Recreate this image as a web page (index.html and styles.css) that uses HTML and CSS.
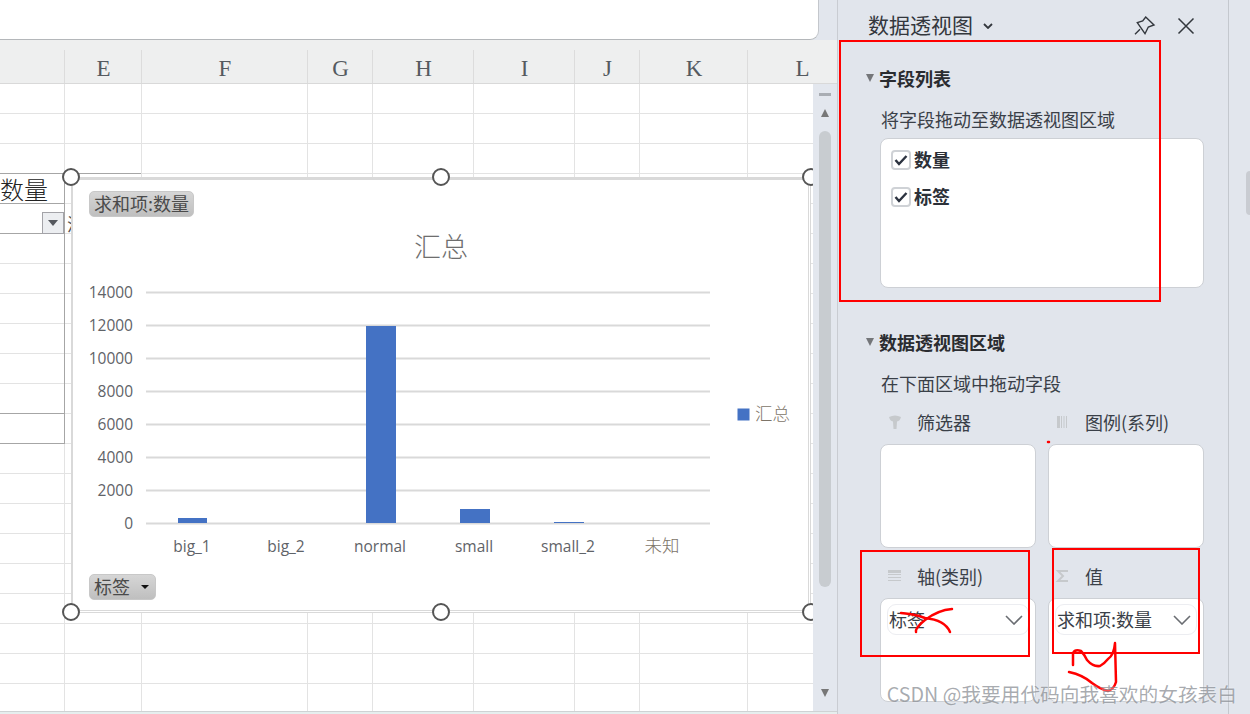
FILE: index.html
```html
<!DOCTYPE html>
<html lang="zh-CN">

<head>
    <meta charset="UTF-8">
    <meta name="viewport" content="width=device-width, initial-scale=1.0">
    <title>数据透视图</title>
    <link rel="stylesheet" href="styles.css">
</head>

<body>
    <div class="app">
        <section class="sheet">
            <div class="formula-bar">
                <div class="formula-input"></div>
            </div>

            <div class="col-heads cols">
                <div class="col-head"></div>
                <div class="col-head">E</div>
                <div class="col-head">F</div>
                <div class="col-head">G</div>
                <div class="col-head">H</div>
                <div class="col-head">I</div>
                <div class="col-head">J</div>
                <div class="col-head">K</div>
                <div class="col-head last">L</div>
            </div>

            <div class="sheet-main">
                <div class="grid cols">
                    <div class="grid-col"></div>
                    <div class="grid-col"></div>
                    <div class="grid-col"></div>
                    <div class="grid-col"></div>
                    <div class="grid-col"></div>
                    <div class="grid-col"></div>
                    <div class="grid-col"></div>
                    <div class="grid-col"></div>
                    <div class="grid-col last"></div>

                    <!-- pivot table sitting on the cells -->
                    <div class="pivot">
                        <div class="pivot-head">数量</div>
                        <div class="pivot-filter">
                            <span class="pivot-btn"><i class="arrow-down"></i></span>
                            <span class="pivot-next">汇总</span>
                        </div>
                        <div class="pivot-body"></div>
                        <div class="pivot-foot"></div>
                    </div>

                    <div class="chart">
                        <svg class="chart-svg" viewBox="73 180 734 430" width="734" height="430">
                            <text x="441" y="257" class="chart-title" text-anchor="middle">汇总</text>

                            <g class="gridlines">
                                <line x1="146" x2="710" y1="292.5" y2="292.5" />
                                <line x1="146" x2="710" y1="325.5" y2="325.5" />
                                <line x1="146" x2="710" y1="358.5" y2="358.5" />
                                <line x1="146" x2="710" y1="391.5" y2="391.5" />
                                <line x1="146" x2="710" y1="424.5" y2="424.5" />
                                <line x1="146" x2="710" y1="457.5" y2="457.5" />
                                <line x1="146" x2="710" y1="490.5" y2="490.5" />
                                <line x1="146" x2="710" y1="523.5" y2="523.5" />
                            </g>

                            <g class="y-labels" text-anchor="end">
                                <text x="133" y="298">14000</text>
                                <text x="133" y="331">12000</text>
                                <text x="133" y="364">10000</text>
                                <text x="133" y="397">8000</text>
                                <text x="133" y="430">6000</text>
                                <text x="133" y="463">4000</text>
                                <text x="133" y="496">2000</text>
                                <text x="133" y="529">0</text>
                            </g>

                            <g class="bars">
                                <rect x="178" y="518" width="29" height="5" />
                                <rect x="366" y="326" width="30" height="197" />
                                <rect x="460" y="509" width="30" height="14" />
                                <rect x="554" y="522" width="30" height="1" />
                            </g>

                            <g class="x-labels" text-anchor="middle">
                                <text x="192" y="552">big_1</text>
                                <text x="286" y="552">big_2</text>
                                <text x="380" y="552">normal</text>
                                <text x="474" y="552">small</text>
                                <text x="568" y="552">small_2</text>
                                <text x="662" y="552" class="cjk-label">未知</text>
                            </g>

                            <rect x="737.5" y="408.500" width="12" height="12" class="legend-key" />
                            <text x="755" y="420" class="cjk-label">汇总</text>
                        </svg>

                        <div class="field-btn field-value">求和项:数量</div>
                        <div class="field-btn field-axis">标签<i class="arrow-small"></i></div>

                        <span class="handle h-tl"></span>
                        <span class="handle h-tc"></span>
                        <span class="handle h-tr"></span>
                        <span class="handle h-bl"></span>
                        <span class="handle h-bc"></span>
                        <span class="handle h-br"></span>
                    </div>
                </div>

                <div class="scrollbar">
                    <div class="scroll-minus"></div>
                    <div class="scroll-up"></div>
                    <div class="scroll-thumb"></div>
                    <div class="scroll-down"></div>
                </div>
            </div>

            <div class="sheet-foot"></div>
        </section>

        <aside class="panel">
            <header class="panel-top">
                <h1 class="panel-title">数据透视图</h1>
                <svg class="panel-caret" width="10" height="6" viewBox="0 0 10 6">
                    <path d="M1 1 L5 5 L9 1" />
                </svg>
                <svg class="pin" width="22" height="22" viewBox="0 0 22 22">
                    <path d="M11.700 2 L20 10 L14.300 12 L11 18.700 L3.300 7.700 L8.700 6 Z M6 14.300 L1 19.300" />
                </svg>
                <svg class="close" width="18" height="18" viewBox="0 0 18 18">
                    <path d="M1.500 1.500 L16.500 16.500 M16.500 1.500 L1.500 16.500" />
                </svg>
            </header>

            <h2 class="section-head first"><i class="tri"></i>字段列表</h2>
            <p class="hint">将字段拖动至数据透视图区域</p>
            <div class="field-list">
                <label class="field-row">
                    <span class="check"><svg width="14" height="12" viewBox="0 0 14 12"><path d="M1.500 6 L5 10 L12.500 2" /></svg></span>
                    数量
                </label>
                <label class="field-row">
                    <span class="check"><svg width="14" height="12" viewBox="0 0 14 12"><path d="M1.500 6 L5 10 L12.500 2" /></svg></span>
                    标签
                </label>
            </div>

            <h2 class="section-head second"><i class="tri"></i>数据透视图区域</h2>
            <p class="hint">在下面区域中拖动字段</p>

            <div class="areas">
                <div class="area">
                    <div class="area-label">
                        <svg width="16" height="16" viewBox="0 0 16 16" class="area-icon">
                            <path d="M2 3 Q8 0 14 3 Q13 7 10 7.500 L9.500 15 L6.500 15 L6 7.500 Q3 7 2 3 Z" />
                        </svg>
                        筛选器
                    </div>
                    <div class="area-box"></div>
                </div>
                <div class="area">
                    <div class="area-label">
                        <svg width="16" height="16" viewBox="0 0 16 16" class="area-icon">
                            <rect x="2" y="2" width="3" height="12" />
                            <rect x="6" y="2" width="1" height="12" />
                            <rect x="8.500" y="2" width="1" height="12" />
                            <rect x="11" y="2" width="1" height="12" />
                        </svg>
                        图例(系列)
                    </div>
                    <div class="area-box"></div>
                </div>
                <div class="area">
                    <div class="area-label">
                        <svg width="16" height="16" viewBox="0 0 16 16" class="area-icon">
                            <rect x="1" y="2" width="13" height="3" />
                            <rect x="1" y="6" width="13" height="1" />
                            <rect x="1" y="9" width="13" height="1" />
                            <rect x="1" y="12" width="13" height="1" />
                        </svg>
                        轴(类别)
                    </div>
                    <div class="area-box">
                        <div class="pill">标签
                            <svg width="18" height="10" viewBox="0 0 18 10"><path d="M1 1 L9 9 L17 1" /></svg>
                        </div>
                    </div>
                </div>
                <div class="area">
                    <div class="area-label">
                        <svg width="16" height="16" viewBox="0 0 16 16" class="area-icon sigma">
                            <path d="M13 3 L3 3 L8 8 L3 13 L13 13" />
                        </svg>
                        值
                    </div>
                    <div class="area-box">
                        <div class="pill">求和项:数量
                            <svg width="18" height="10" viewBox="0 0 18 10"><path d="M1 1 L9 9 L17 1" /></svg>
                        </div>
                    </div>
                </div>
            </div>
        </aside>

        <div class="side-strip">
            <div class="strip-tab"></div>
        </div>
    </div>

    <!-- red pen marks on top of everything -->
    <div class="red-box box-fields"></div>
    <div class="red-box box-axis"></div>
    <div class="red-box box-value"></div>
    <svg class="pen" width="1250" height="714" viewBox="0 0 1250 714">
        <path d="M901 613 Q915 614 925 618 Q945 620 950 632" />
        <path d="M952 609 Q938 610 925 620 Q915 628 916 632" />
        <path d="M1073 665 L1073 653 Q1075 649 1081 651 Q1084 654 1087 660 Q1093 667 1100 666 Q1104 664 1108 659 Q1114 655 1115 643 L1116 682 Q1114 689 1108 691 Q1100 689 1092 683 Q1083 675 1069 672" />
        <path class="dot" d="M1048 442 L1049 442" />
    </svg>

    <div class="watermark">CSDN @我要用代码向我喜欢的女孩表白</div>
</body>

</html>
```

FILE: styles.css
```css
* {
    box-sizing: border-box;
}

html,
body {
    margin: 0;
    height: 100%;
    overflow: hidden;
}

body {
    position: relative;
    font-family: "Noto Sans CJK SC", sans-serif;
    color: #2b2f36;
}

.app {
    display: flex;
    height: 714px;
    background-color: #e2e6ed;
}

/* ---- sheet ---- */
.sheet {
    display: flex;
    flex-direction: column;
    width: 837px;
    flex-shrink: 0;
}

.formula-bar {
    height: 40px;
}

.formula-input {
    width: 819px;
    height: 40px;
    background-color: #fff;
    border-right: 1px solid #c4c7cc;
    border-bottom: 1px solid #b4b7ba;
    border-bottom-right-radius: 9px;
}

.cols {
    display: grid;
    grid-template-columns: 65px 77px 166px 65px 101px 101px 65px 108px 108px;
}

.col-heads {
    height: 44px;
    padding-top: 10px;
    background-color: #eeefef;
    border-bottom: 1px solid #d9d9d9;
    overflow: hidden;
}

.col-head {
    padding-left: 1px;
    border-right: 1px solid #dcdcdc;
    text-align: center;
    font-family: "Liberation Serif", serif;
    font-size: 23px;
    line-height: 37px;
    color: #555a60;
}

.col-head.last {
    border-right: 0;
}

.sheet-main {
    display: flex;
    height: 627px;
    overflow: hidden;
}

.grid {
    position: relative;
    width: 813px;
    flex-shrink: 0;
    background-color: #fff;
    background-image: repeating-linear-gradient(to bottom, transparent 0, transparent 29px, #e3e3e3 29px, #e3e3e3 30px);
}

.grid-col {
    border-right: 1px solid #e3e3e3;
}

.grid-col.last {
    border-right: 0;
}

/* pivot table: offsets are from the top of the grid */
.pivot {
    position: absolute;
    left: 0;
    top: 89px;
    width: 65px;
    height: 271px;
    border-right: 1px solid #a6a6a6;
    border-bottom: 1px solid #a6a6a6;
}

.pivot-head {
    position: relative;
    height: 31px;
    border-top: 1px solid #a6a6a6;
    border-bottom: 1px solid #a6a6a6;
    font-size: 24px;
    font-weight: 300;
    line-height: 30px;
    color: #222;
    white-space: nowrap;
}

.pivot-head::after {
    content: "";
    position: absolute;
    left: 64px;
    top: -1px;
    width: 77px;
    border-top: 1px solid #a6a6a6;
}

.pivot-filter {
    position: relative;
    height: 30px;
    border-bottom: 1px solid #a6a6a6;
}

.pivot-btn {
    position: absolute;
    right: 0;
    top: 8px;
    display: flex;
    align-items: center;
    justify-content: center;
    width: 22px;
    height: 22px;
    background-color: #eceef1;
    border: 1px solid #a3a3a8;
}

.arrow-down {
    border-left: 5px solid transparent;
    border-right: 5px solid transparent;
    border-top: 6px solid #55585e;
}

.pivot-next {
    position: absolute;
    left: 67px;
    top: 8px;
    font-size: 18px;
    line-height: 22px;
    color: #555;
    white-space: nowrap;
}

.pivot-body {
    height: 180px;
    border-bottom: 1px solid #a6a6a6;
}

.pivot-foot {
    height: 29px;
}

/* ---- chart object ---- */
.chart {
    position: absolute;
    left: 71px;
    top: 93px;
    width: 740px;
    height: 436px;
    background-color: #fff;
    border: 3px solid #d9d9d9;
    border-right-style: double;
    border-bottom-style: double;
    border-left-width: 2px;
}

.chart-svg {
    display: block;
    font-family: "Open Sans", sans-serif;
    font-size: 15.5px;
    fill: #5f6368;
}

.chart-title {
    font-family: "Noto Sans CJK SC", sans-serif;
    font-size: 27px;
    font-weight: 300;
    fill: #6e6e6e;
}

.gridlines line {
    stroke: #d9d9d9;
    stroke-width: 2;
}

.bars rect,
.legend-key {
    fill: #4472c4;
}

.cjk-label {
    font-family: "Noto Sans CJK SC", sans-serif;
    font-size: 17.500px;
    font-weight: 300;
    fill: #7d7468;
}

.field-btn {
    position: absolute;
    display: flex;
    align-items: center;
    left: 16px;
    height: 26px;
    padding: 0 0 2px 4px;
    font-size: 18px;
    color: #4a4a4a;
    background: linear-gradient(to bottom, #d6d6d6, #bfbfbf);
    border: 1px solid #c8c8c8;
    border-radius: 5px;
    white-space: nowrap;
}

.field-value {
    top: 11px;
    width: 105px;
}

.field-axis {
    top: 394px;
    width: 67px;
}

.arrow-small {
    margin-left: 11px;
    margin-top: 2px;
    border-left: 4px solid transparent;
    border-right: 4px solid transparent;
    border-top: 4px solid #111;
}

.handle {
    position: absolute;
    width: 18px;
    height: 18px;
    background-color: #fff;
    border: 2px solid #555;
    border-radius: 50%;
}

.h-tl { left: -11px; top: -12px; }
.h-tc { left: 359px; top: -12px; }
.h-tr { left: 729px; top: -12px; }
.h-bl { left: -11px; top: 423px; }
.h-bc { left: 359px; top: 423px; }
.h-br { left: 729px; top: 423px; }

/* ---- vertical scrollbar ---- */
.scrollbar {
    position: relative;
    display: flex;
    flex-direction: column;
    align-items: center;
    flex: 1;
    padding-top: 9px;
    background-color: #e3e7ee;
}

.scroll-minus {
    width: 12px;
    height: 3px;
    background-color: #a9adb3;
}

.scroll-up {
    margin-top: 13px;
    border-left: 4px solid transparent;
    border-right: 4px solid transparent;
    border-bottom: 8px solid #777;
}

.scroll-thumb {
    width: 12px;
    height: 456px;
    margin-top: 14px;
    background-color: #c8ccd0;
    border-radius: 6px;
}

.scroll-down {
    margin-top: 102px;
    border-left: 4px solid transparent;
    border-right: 4px solid transparent;
    border-top: 8px solid #777;
}

.sheet-foot {
    height: 3px;
    background-color: #e6eeee;
    border-top: 1px solid #cfd2d4;
}

/* ---- pivot chart panel ---- */
.panel {
    width: 392px;
    flex-shrink: 0;
    padding-left: 41px;
    background-color: #e1e5ec;
    border-left: 1px solid #c9ccd2;
    border-right: 1px solid #c4c8ce;
}

.panel-top {
    display: flex;
    align-items: center;
    height: 52px;
    margin-left: -11px;
}

.panel-title {
    margin: 0 0 4px;
    font-size: 21px;
    font-weight: 400;
    color: #33373d;
}

.panel-caret {
    margin-left: 10px;
    fill: none;
    stroke: #33373d;
    stroke-width: 1.8;
}

.pin {
    margin-left: 141px;
    fill: none;
    stroke: #33373d;
    stroke-width: 1.4;
}

.close {
    margin-left: 21px;
    fill: none;
    stroke: #33373d;
    stroke-width: 1.5;
}

.section-head {
    position: relative;
    margin: 0;
    padding-bottom: 2px;
    font-size: 18px;
    line-height: 22px;
    font-weight: 700;
    color: #2a2c30;
}

.section-head.first {
    margin-top: 15px;
}

.section-head.second {
    margin-top: 43px;
}

.tri {
    position: absolute;
    left: -13px;
    top: 7px;
    border-left: 4px solid transparent;
    border-right: 4px solid transparent;
    border-top: 8px solid #747679;
}

.hint {
    margin: 17px 0 0 2px;
    padding-bottom: 2px;
    font-size: 18px;
    line-height: 22px;
    color: #3a4048;
}

.field-list {
    width: 324px;
    height: 150px;
    margin: 6px 0 0 1px;
    padding: 11px 10px;
    background-color: #fff;
    border: 1px solid #cdd0d5;
    border-radius: 8px;
}

.field-row {
    display: flex;
    align-items: center;
    height: 20px;
    margin-bottom: 17px;
    padding-bottom: 2px;
    font-size: 18px;
    font-weight: 700;
    color: #2c3038;
}

.check {
    display: flex;
    align-items: center;
    justify-content: center;
    width: 20px;
    height: 20px;
    margin: 2px 3px 0 0;
    flex-shrink: 0;
    background-color: #fff;
    border: 2px solid #cfd2d6;
    border-radius: 4px;
}

.check svg {
    fill: none;
    stroke: #2c3340;
    stroke-width: 2.4;
}

.areas {
    display: grid;
    grid-template-columns: 156px 156px;
    column-gap: 12px;
    row-gap: 17px;
    margin: 15px 0 0 1px;
}

.area-label {
    display: flex;
    align-items: center;
    height: 24px;
    margin-left: 7px;
    padding-bottom: 2px;
    font-size: 18px;
    color: #3a4048;
}

.area-icon {
    margin-right: 14px;
    fill: #c6c9cc;
}

.area-icon.sigma {
    fill: none;
    stroke: #c6c9cc;
    stroke-width: 2;
}

.area-box {
    height: 104px;
    margin-top: 9px;
    padding: 5px 6px;
    background-color: #fff;
    border: 1px solid #cdd0d5;
    border-radius: 8px;
}

.pill {
    display: flex;
    align-items: center;
    justify-content: space-between;
    width: 142px;
    height: 31px;
    padding: 0 5px 2px 1px;
    font-size: 18px;
    color: #3a4048;
    background-color: #fff;
    border: 1px solid #ecedf1;
    border-radius: 9px;
}

.pill svg {
    margin-top: 2px;
    fill: none;
    stroke: #6a6d72;
    stroke-width: 1.6;
}

.side-strip {
    position: relative;
    flex: 1;
    background-color: #e2e6ed;
}

.strip-tab {
    position: absolute;
    right: 0;
    top: 171px;
    width: 4px;
    height: 44px;
    background-color: #c9ccd2;
    border-radius: 4px 0 0 4px;
}

/* ---- red pen marks ---- */
.red-box {
    position: absolute;
    border: 2px solid #f00;
}

.box-fields {
    left: 839px;
    top: 40px;
    width: 322px;
    height: 262px;
}

.box-axis {
    left: 860px;
    top: 550px;
    width: 170px;
    height: 107px;
}

.box-value {
    left: 1052px;
    top: 548px;
    width: 148px;
    height: 106px;
}

.pen {
    position: absolute;
    left: 0;
    top: 0;
    fill: none;
    stroke: #f00;
    stroke-width: 2.500;
    stroke-linecap: round;
    stroke-linejoin: round;
}

.watermark {
    position: absolute;
    right: 13px;
    top: 680px;
    font-size: 19.700px;
    line-height: 28px;
    color: rgba(110, 115, 122, 0.6);
    text-shadow: 0 0 2px rgba(255, 255, 255, 0.7);
    white-space: nowrap;
}
```
